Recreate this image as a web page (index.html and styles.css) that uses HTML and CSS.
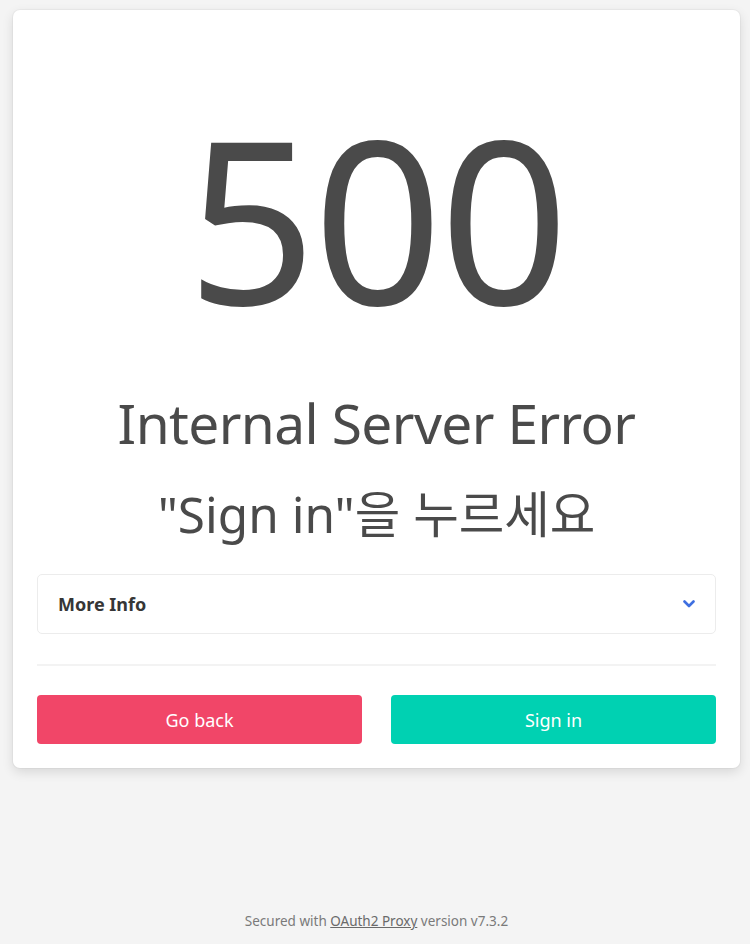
FILE: index.html
```html
<!DOCTYPE html>
<html lang="ko">
<head>
<meta charset="utf-8">
<title>500 Internal Server Error</title>
<link rel="stylesheet" href="styles.css">
</head>
<body>
<main class="page">
  <section class="card">
    <h1 class="code">500</h1>
    <p class="title">Internal Server Error</p>
    <p class="message">"Sign in"을 누르세요</p>
    <div class="info">
      <span class="info-label">More Info</span>
      <svg class="chevron" width="12" height="8" viewBox="0 0 12 8"><path d="M1.5 1.5 L6 6 L10.5 1.5" fill="none" stroke="#3e6fe0" stroke-width="2.6" stroke-linecap="round" stroke-linejoin="round"/></svg>
    </div>
    <hr class="divider">
    <div class="actions">
      <button class="btn btn-back">Go back</button>
      <button class="btn btn-signin">Sign in</button>
    </div>
  </section>
  <footer class="footer">Secured with <a href="#">OAuth2 Proxy</a> version v7.3.2</footer>
</main>
</body>
</html>
```

FILE: styles.css
```css
html, body {
  margin: 0;
  padding: 0;
  background: #f4f4f4;
}
body {
  font-family: "Noto Sans", "Noto Sans CJK KR", sans-serif;
  color: #4a4a4a;
}
.page {
  width: 750px;
  height: 944px;
  display: flex;
  flex-direction: column;
  box-sizing: border-box;
  padding: 10px 10px 0 13px;
}
.card {
  width: 727px;
  box-sizing: border-box;
  background: #fff;
  border-radius: 7px;
  box-shadow: 0 4px 12px rgba(10, 10, 10, 0.12), 0 0 0 1px rgba(10, 10, 10, 0.03);
  padding: 24px;
  display: flex;
  flex-direction: column;
}
.code {
  margin: 70px 0 0;
  text-align: center;
  font-size: 226px;
  font-weight: 400;
  line-height: 1;
  color: #4a4a4a;
  letter-spacing: -3px;
}
.title {
  margin: 60px 0 0;
  text-align: center;
  font-size: 55px;
  line-height: 66px;
  letter-spacing: -0.6px;
}
.message {
  margin: 29px 0 0;
  text-align: center;
  font-size: 49.5px;
  line-height: 59px;
}
.info {
  margin-top: 30px;
  height: 60px;
  box-sizing: border-box;
  border: 1px solid #ececec;
  border-radius: 5px;
  display: flex;
  align-items: center;
  justify-content: space-between;
  padding: 0 20px;
}
.info-label {
  font-weight: 700;
  font-size: 18px;
  color: #363636;
}
.divider {
  margin: 30px 0 0;
  border: none;
  height: 2px;
  background: #f3f3f3;
}
.actions {
  margin-top: 29px;
  display: flex;
  gap: 29px;
}
.btn {
  flex: 1;
  height: 49px;
  border: none;
  border-radius: 4px;
  color: #fff;
  font-family: "Noto Sans", sans-serif;
  font-size: 18px;
}
.btn-back { background: #f14668; }
.btn-signin { background: #00d1b2; }
.footer {
  margin-top: auto;
  margin-bottom: 14px;
  text-align: center;
  font-size: 13.5px;
  color: #7a7a7a;
}
.footer a { color: #6a6a6a; }
```
